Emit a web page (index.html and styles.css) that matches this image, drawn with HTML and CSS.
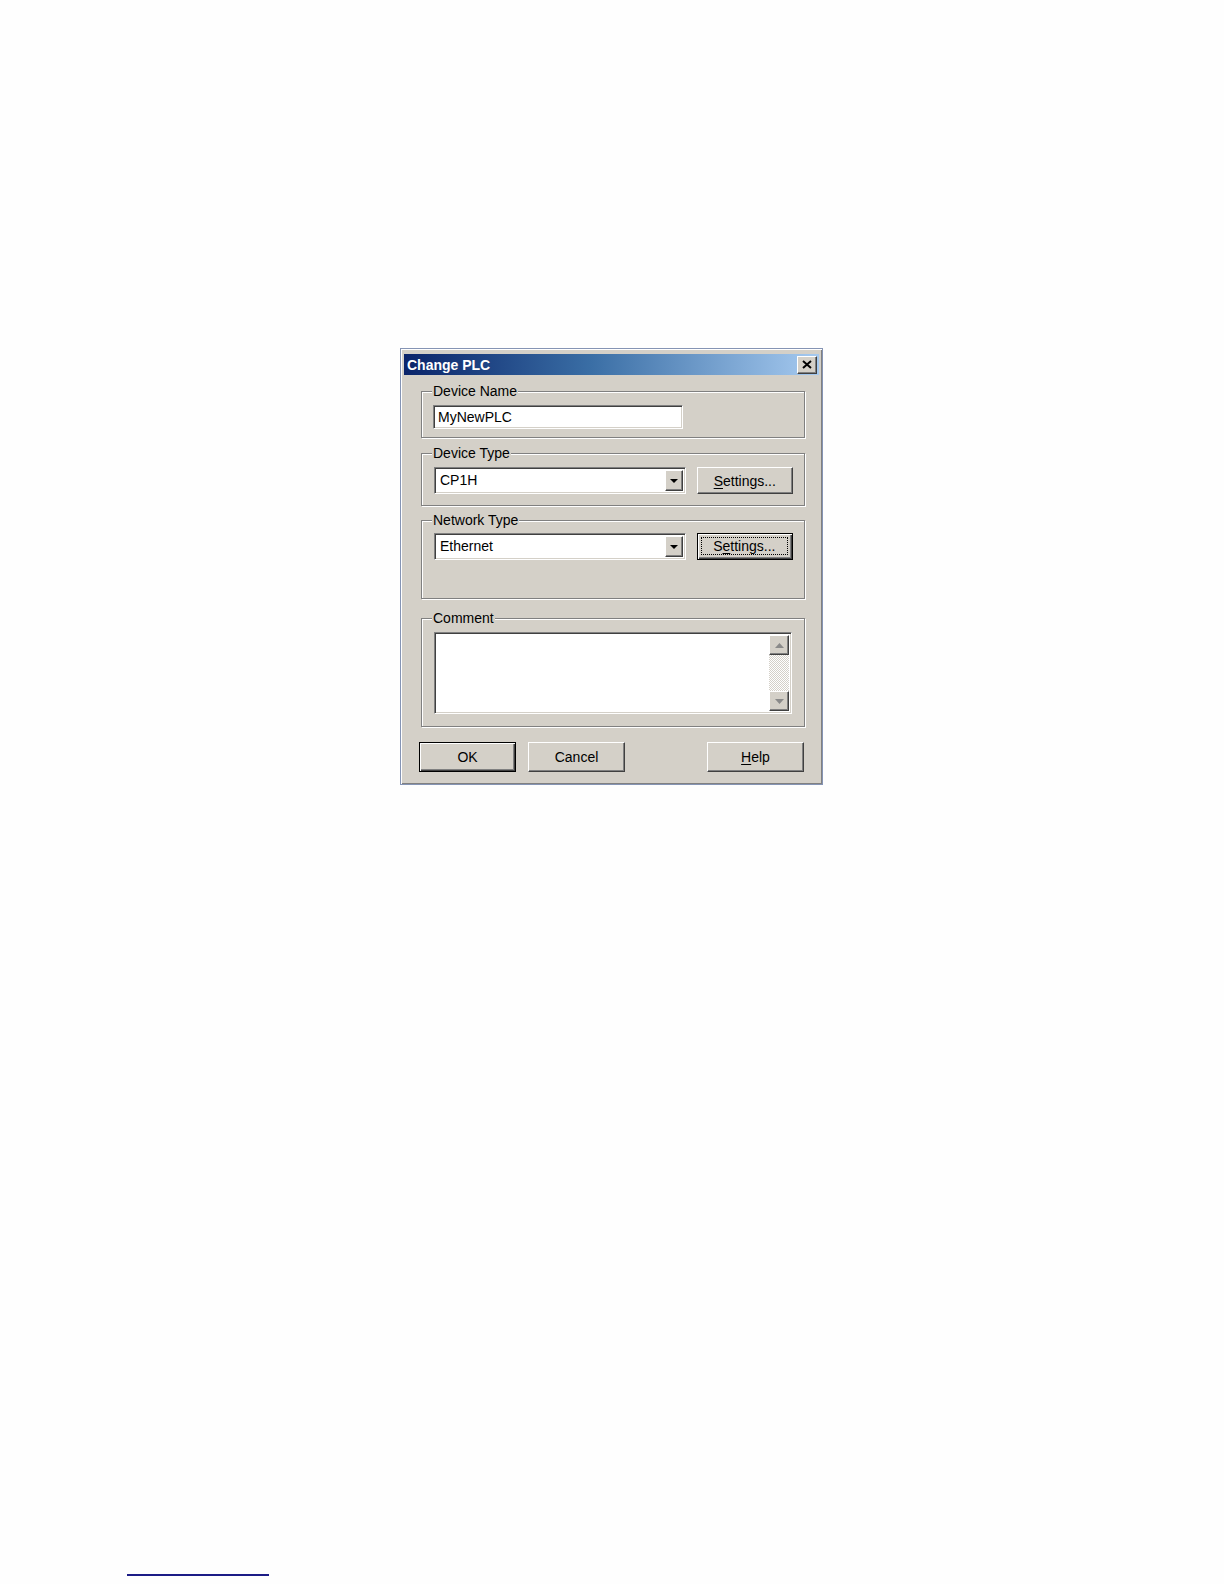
FILE: index.html
```html
<!DOCTYPE html>
<html lang="en">
<head>
<meta charset="utf-8">
<title>Change PLC</title>
<link rel="stylesheet" href="styles.css">
</head>
<body>
<div class="page">
  <div class="dialog">
    <div class="titlebar">
      <span class="title">Change PLC</span>
      <button class="close" type="button" aria-label="Close">
        <svg width="10" height="9" viewBox="0 0 10 9"><path d="M1 1 L9 8 M9 1 L1 8" stroke="#000" stroke-width="2" fill="none"/></svg>
      </button>
    </div>
    <div class="content">
      <fieldset class="group g-name">
        <legend>Device Name</legend>
        <div class="textbox">MyNewPLC</div>
      </fieldset>
      <fieldset class="group g-type">
        <legend>Device Type</legend>
        <div class="row">
          <div class="combo">
            <span class="combo-text">CP1H</span>
            <span class="combo-btn"><svg width="8" height="4" viewBox="0 0 8 4"><polygon points="0,0 8,0 4,4" fill="#000"/></svg></span>
          </div>
          <button class="btn btn-settings" type="button"><span class="lbl"><u>S</u>ettings...</span></button>
        </div>
      </fieldset>
      <fieldset class="group g-net">
        <legend>Network Type</legend>
        <div class="row">
          <div class="combo">
            <span class="combo-text">Ethernet</span>
            <span class="combo-btn"><svg width="8" height="4" viewBox="0 0 8 4"><polygon points="0,0 8,0 4,4" fill="#000"/></svg></span>
          </div>
          <button class="btn btn-settings btn-focus" type="button"><span class="lbl">S<u>e</u>ttings...</span></button>
        </div>
      </fieldset>
      <fieldset class="group g-comment">
        <legend>Comment</legend>
        <div class="memo">
          <div class="memo-text"></div>
          <div class="scrollbar">
            <span class="sb-btn"><svg width="9" height="5" viewBox="0 0 9 5"><polygon points="0,5 9,5 4.5,0" fill="#8a8a8a"/></svg></span>
            <span class="sb-track"></span>
            <span class="sb-btn"><svg width="9" height="5" viewBox="0 0 9 5"><polygon points="0,0 9,0 4.5,5" fill="#8a8a8a"/></svg></span>
          </div>
        </div>
      </fieldset>
    </div>
    <div class="actions">
      <button class="btn btn-default btn-ok" type="button"><span class="lbl">OK</span></button>
      <button class="btn btn-cancel" type="button"><span class="lbl">Cancel</span></button>
      <button class="btn btn-help" type="button"><span class="lbl"><u>H</u>elp</span></button>
    </div>
  </div>
  <div class="footnote-rule"></div>
</div>
</body>
</html>
```

FILE: styles.css
```css
* {
  box-sizing: border-box;
}

html,
body {
  margin: 0;
  background: #fefefe;
}

body {
  font-family: "Liberation Sans", Arial, sans-serif;
  font-size: 14px;
  color: #000;
}

.page {
  padding-top: 348px;
  height: 1584px;
}

/* ---------- dialog frame ---------- */
.dialog {
  margin-left: 400px;
  width: 423px;
  height: 437px;
  background: #d4d0c8;
  border: 1px solid #8594b4;
  box-shadow: inset 1px 1px 0 #ffffff, inset -1px -1px 0 #808080;
  padding: 5px 3px 0 3px;
  display: flex;
  flex-direction: column;
}

.titlebar {
  height: 21px;
  display: flex;
  align-items: center;
  justify-content: space-between;
  padding: 0 2px 0 3px;
  background: linear-gradient(to right, #0a246a 0%, #3a6ea5 45%, #a6caf0 100%);
}

.title {
  color: #ffffff;
  font-weight: bold;
  font-size: 14px;
  line-height: 16px;
}

.close {
  width: 20px;
  height: 18px;
  padding: 0;
  margin: 0;
  background: #d4d0c8;
  border: 1px solid;
  border-color: #ffffff #404040 #404040 #ffffff;
  box-shadow: inset -1px -1px 0 #808080;
  display: flex;
  align-items: center;
  justify-content: center;
}

/* ---------- group boxes ---------- */
.content {
  padding: 0 0 0 17px;
}

.group {
  width: 384px;
  margin: 6px 0 0 0;
  min-width: 0;
  border: 1px solid #808080;
  box-shadow: inset 1px 1px 0 #ffffff, 1px 1px 0 #ffffff;
  padding: 6px 11px 11px 12px;
}

.group legend {
  padding: 0 1px;
  margin-left: -2px;
  line-height: 16px;
  background: #d4d0c8;
}

.g-name {
  margin-top: 8px;
  padding-left: 11px;
  padding-bottom: 8px;
}

.g-name legend {
  margin-left: -1px;
}

.g-type {
  margin-top: 7px;
}

.g-net {
  padding-top: 5px;
  padding-bottom: 38px;
}

.g-comment {
  margin-top: 11px;
  padding-bottom: 12px;
}

/* ---------- controls ---------- */
.textbox {
  width: 250px;
  height: 24px;
  background: #ffffff;
  border: 1px solid;
  border-color: #808080 #ffffff #ffffff #808080;
  box-shadow: inset 1px 1px 0 #404040, inset -1px -1px 0 #d4d0c8;
  padding: 0 4px;
  line-height: 22px;
}

.row {
  display: flex;
  align-items: center;
  gap: 11px;
}

.combo {
  width: 253px;
  height: 27px;
  background: #ffffff;
  border: 1px solid;
  border-color: #808080 #ffffff #ffffff #808080;
  box-shadow: inset 1px 1px 0 #404040, inset -1px -1px 0 #d4d0c8;
  padding: 2px;
  display: flex;
  align-items: stretch;
}

.combo-text {
  flex: 1;
  padding-left: 3px;
  line-height: 21px;
}

.combo-btn {
  width: 18px;
  background: #d4d0c8;
  border: 1px solid;
  border-color: #ffffff #404040 #404040 #ffffff;
  box-shadow: inset -1px -1px 0 #808080;
  display: flex;
  align-items: center;
  justify-content: center;
}

.btn {
  height: 30px;
  padding: 0;
  margin: 0;
  font-family: "Liberation Sans", Arial, sans-serif;
  font-size: 14px;
  color: #000;
  background: #d4d0c8;
  border: 1px solid;
  border-color: #ffffff #404040 #404040 #ffffff;
  box-shadow: inset -1px -1px 0 #808080;
  display: flex;
  align-items: center;
  justify-content: center;
}

.btn u {
  text-decoration-thickness: 1px;
  text-underline-offset: 2px;
}

.btn-settings {
  width: 97px;
  height: 27px;
}

.btn-default,
.btn-focus {
  border: 1px solid #000000;
  box-shadow: inset 1px 1px 0 #ffffff, inset -1px -1px 0 #404040, inset -2px -2px 0 #808080;
}

.btn-focus .lbl {
  align-self: stretch;
  flex: 1;
  margin: 3px 4px 4px 3px;
  border: 1px dotted #000000;
  display: flex;
  align-items: center;
  justify-content: center;
}

/* ---------- memo with scrollbar ---------- */
.memo {
  width: 358px;
  height: 82px;
  background: #ffffff;
  border: 1px solid;
  border-color: #808080 #ffffff #ffffff #808080;
  box-shadow: inset 1px 1px 0 #404040, inset -1px -1px 0 #d4d0c8;
  padding: 2px;
  display: flex;
}

.memo-text {
  flex: 1;
}

.scrollbar {
  width: 20px;
  display: flex;
  flex-direction: column;
}

.sb-btn {
  height: 20px;
  background: #d4d0c8;
  border: 1px solid;
  border-color: #ffffff #404040 #404040 #ffffff;
  box-shadow: inset -1px -1px 0 #808080;
  display: flex;
  align-items: center;
  justify-content: center;
}

.sb-track {
  flex: 1;
  background: repeating-conic-gradient(#ffffff 0 25%, #d4d0c8 0 50%) 0 0 / 2px 2px;
}

/* ---------- bottom buttons ---------- */
.actions {
  display: flex;
  margin-top: 15px;
  padding: 0 15px 0 15px;
}

.btn-ok {
  width: 97px;
}

.btn-cancel {
  width: 97px;
  margin-left: 12px;
}

.btn-help {
  width: 97px;
  margin-left: auto;
}

/* ---------- footnote separator ---------- */
.footnote-rule {
  margin-top: 789px;
  margin-left: 127px;
  width: 142px;
  height: 2px;
  background: #1c1c86;
}
```
